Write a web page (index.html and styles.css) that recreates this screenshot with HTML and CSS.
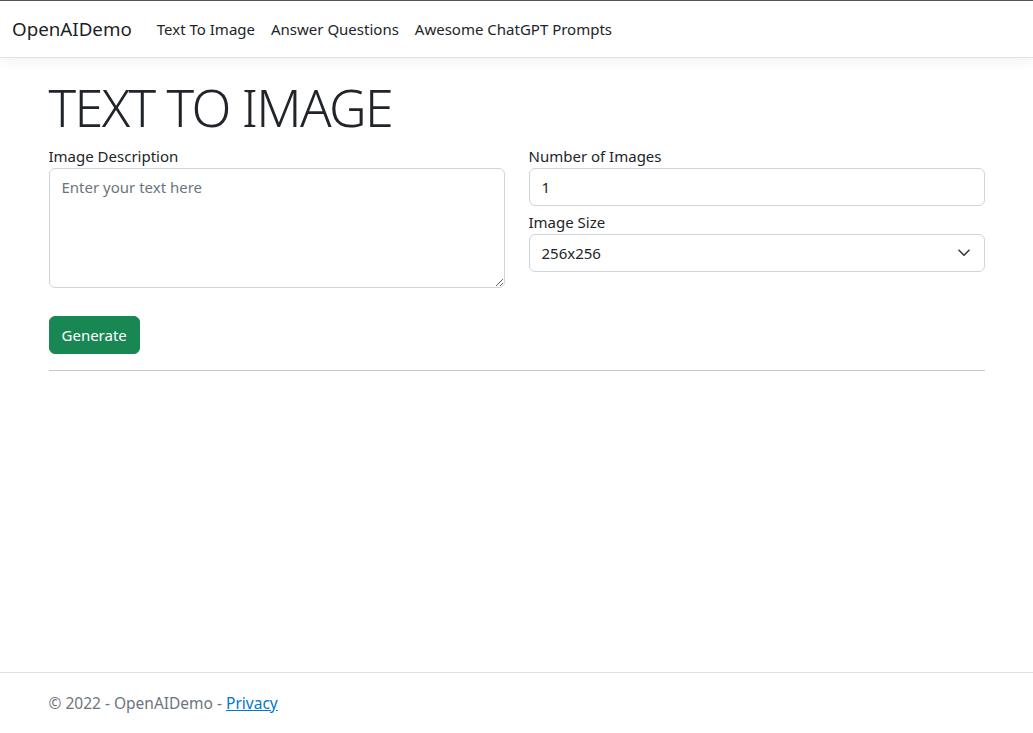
FILE: index.html
```html
<!DOCTYPE html>
<html lang="en">
<head>
<meta charset="utf-8">
<title>Text To Image - OpenAIDemo</title>
<link rel="stylesheet" href="styles.css">
</head>
<body>
<header>
  <nav class="navbar">
    <a class="brand" href="#">OpenAIDemo</a>
    <ul class="nav">
      <li><a class="nav-link" href="#">Text To Image</a></li>
      <li><a class="nav-link" href="#">Answer Questions</a></li>
      <li><a class="nav-link" href="#">Awesome ChatGPT Prompts</a></li>
    </ul>
  </nav>
</header>
<div class="container">
  <main class="main">
    <h1 class="display">TEXT TO IMAGE</h1>
    <form class="form">
      <div class="row">
        <div class="col">
          <label class="label" for="desc">Image Description</label>
          <textarea id="desc" class="control textarea" placeholder="Enter your text here"></textarea>
        </div>
        <div class="col">
          <label class="label" for="num">Number of Images</label>
          <input id="num" class="control input-gap" type="text" value="1">
          <label class="label" for="size">Image Size</label>
          <div class="select" id="size">
            <span>256x256</span>
            <svg class="chev" width="12" height="8" viewBox="0 0 12 8"><path d="M1 1.2l5 5 5-5" fill="none" stroke="#343a40" stroke-width="1.6" stroke-linecap="round" stroke-linejoin="round"/></svg>
          </div>
        </div>
      </div>
      <button class="btn" type="button">Generate</button>
    </form>
    <hr class="rule">
  </main>
</div>
<footer class="footer">
  <div class="container">&copy; 2022 - OpenAIDemo - <a class="privacy" href="#">Privacy</a></div>
</footer>
</body>
</html>
```

FILE: styles.css
```css
* { box-sizing: border-box; }
html, body { height: 100%; }
body {
  margin: 0;
  font-family: "Noto Sans", "Open Sans", sans-serif;
  font-size: 15px;
  line-height: 24px;
  color: #212529;
  background: #fff;
  border-top: 1px solid #555;
  position: relative;
  overflow: hidden;
}
.navbar {
  display: flex;
  align-items: center;
  padding: 8px 12px;
  background: #fff;
  border-bottom: 1px solid #dee2e6;
  box-shadow: 0 .25rem .75rem rgba(0,0,0,.05);
  margin-bottom: 16px;
}
.brand {
  font-size: 18.75px;
  line-height: 30px;
  padding: 5px 0;
  margin-right: 17px;
  color: rgba(0,0,0,.9);
  text-decoration: none;
}
.nav { display: flex; list-style: none; margin: 0; padding: 0; }
.nav-link {
  display: block;
  padding: 8px;
  color: #212529;
  text-decoration: none;
}
.container {
  width: 960px;
  margin: 0 auto;
  padding: 0 12px;
}
.display {
  font-size: 52px;
  font-weight: 300;
  letter-spacing: -1.6px;
  line-height: 62px;
  padding-top: 2px;
  margin: 0 0 6px;
}
.row { display: flex; gap: 24px; }
.col { flex: 1 1 0; min-width: 0; }
.label { display: block; }
.control {
  display: block;
  width: 100%;
  font: inherit;
  color: #212529;
  padding: 6px 12px;
  border: 1px solid #ced4da;
  border-radius: 6px;
  background: #fff;
  height: 38px;
}
.textarea { height: 120px; resize: vertical; }
.textarea::placeholder { color: #6c757d; opacity: 1; }
.input-gap { margin-bottom: 4px; }
.select {
  display: flex;
  align-items: center;
  justify-content: space-between;
  height: 38px;
  padding: 6px 14px 6px 12px;
  border: 1px solid #ced4da;
  border-radius: 6px;
}
.chev { display: block; }
.btn {
  display: inline-block;
  margin-top: 28px;
  font: inherit;
  color: #fff;
  background: #198754;
  border: 1px solid #198754;
  border-radius: 6px;
  padding: 6px 12px;
  height: 38px;
}
.rule {
  margin: 16px 0;
  border: 0;
  border-top: 1px solid #c8c8c8;
}
.footer {
  position: absolute;
  left: 0;
  right: 0;
  bottom: 0;
  font-size: 15.5px;
  line-height: 60px;
  border-top: 1px solid #dee2e6;
  color: #6c757d;
}
.privacy { color: #0077cc; }
```
